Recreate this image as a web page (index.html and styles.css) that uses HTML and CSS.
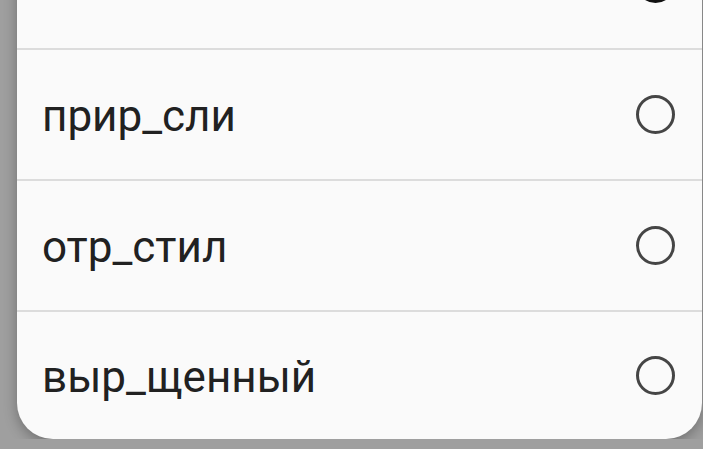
FILE: index.html
```html
<!DOCTYPE html>
<html lang="ru">
<head>
    <meta charset="UTF-8">
    <meta name="viewport" content="width=device-width, initial-scale=1.0">
    <title>Выбор варианта</title>
    <link rel="stylesheet" href="styles.css">
</head>
<body>
    <div class="dialog">
        <div class="option">
            <span class="option-label"></span>
            <span class="radio checked"></span>
        </div>
        <div class="option">
            <span class="option-label">прир_сли</span>
            <span class="radio"></span>
        </div>
        <div class="option">
            <span class="option-label">отр_стил</span>
            <span class="radio"></span>
        </div>
        <div class="option">
            <span class="option-label">выр_щенный</span>
            <span class="radio"></span>
        </div>
    </div>
</body>
</html>
```

FILE: styles.css
```css
* {
    margin: 0;
    padding: 0;
    box-sizing: border-box;
}

body {
    background-color: #9f9f9f;
    font-family: Roboto, 'Noto Sans', sans-serif;
    overflow: hidden;
}

.dialog {
    margin: -81px 1px 0 17px;
    background-color: #fafafa;
    border-radius: 0 0 36px 36px;
    box-shadow: 0 4px 14px rgba(0, 0, 0, 0.3);
}

.option {
    height: 131px;
    display: flex;
    align-items: center;
    justify-content: space-between;
    padding: 0 27px 0 25px;
    border-bottom: 2px solid #dcdcdc;
}

.option:last-child {
    border-bottom: none;
    height: 127px;
}

.option-label {
    font-size: 44px;
    color: #212121;
    padding-top: 2px;
}

.radio {
    width: 39px;
    height: 39px;
    border-radius: 50%;
    border: 3.5px solid #454545;
}

.radio.checked {
    background-color: #111;
    border-color: #111;
}
```
